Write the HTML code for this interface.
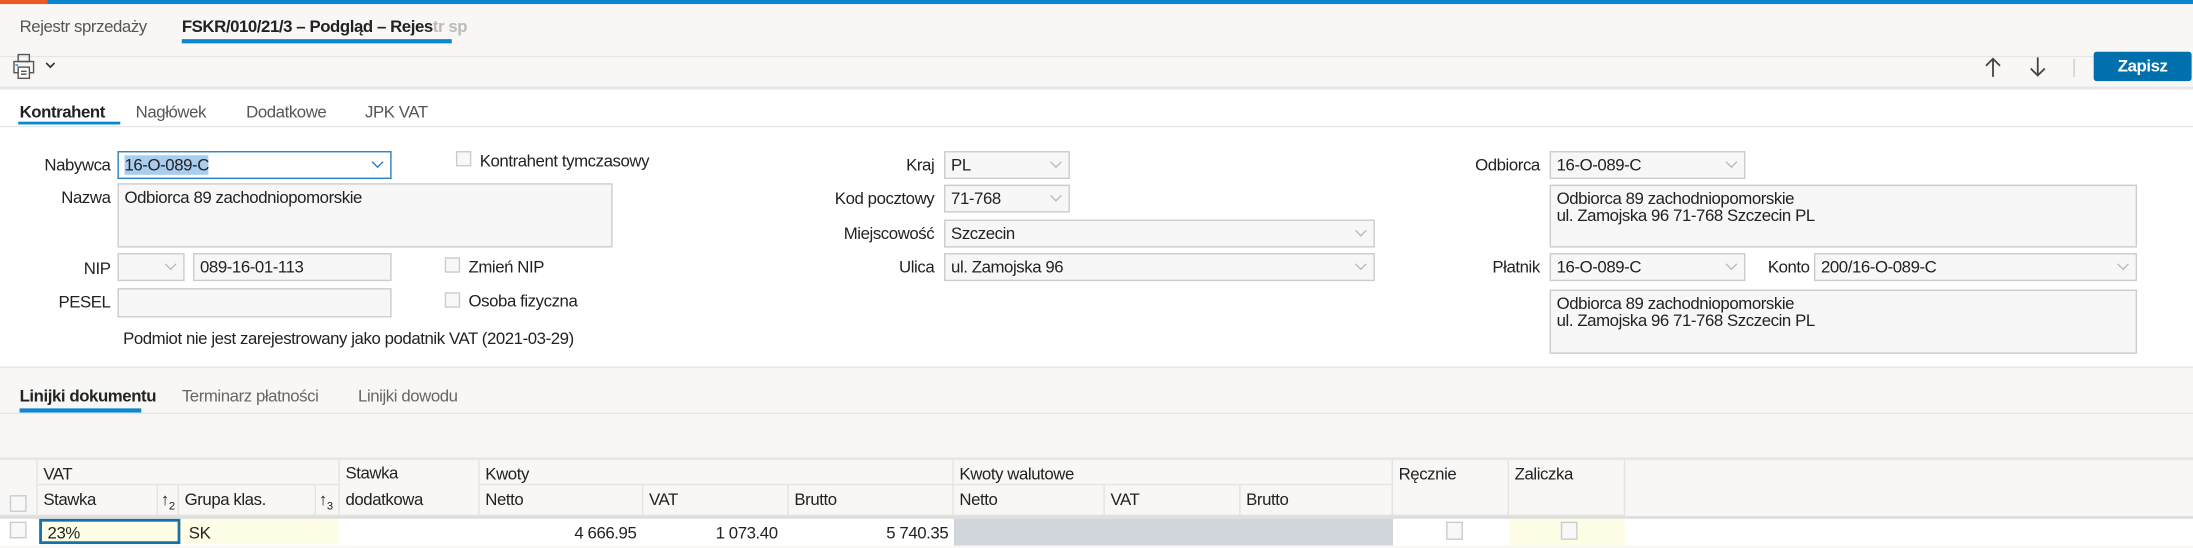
<!DOCTYPE html>
<html><head><meta charset="utf-8"><style>
html,body{margin:0;padding:0;width:2193px;height:546px;overflow:hidden;background:#fff}
#w{position:absolute;left:0;top:0;width:1568px;height:391px;transform:scale(1.39859);transform-origin:0 0;font-family:"Liberation Sans",sans-serif;font-size:12px;color:#222;letter-spacing:-0.3px}
.a{position:absolute;white-space:nowrap}
.box{position:absolute;box-sizing:border-box;border:1px solid #ccc;background:#f7f7f7;padding:3px 4px;line-height:12px}
.chev{position:absolute;right:6px;top:4px;width:5px;height:5px;border-right:1px solid #bbb;border-bottom:1px solid #bbb;transform:rotate(45deg)}
.cb{position:absolute;width:11px;height:11px;border:1px solid #ccc;background:#f8f8f8;box-sizing:border-box}
.r{text-align:right}
.g{position:absolute;box-sizing:border-box;border-right:1px solid #e2e2e2;border-bottom:1px solid #e2e2e2;background:#f8f7f6;padding:4px 4px;line-height:12px}
</style></head><body><div id="w">
<div class="a" style="left:0;top:0;width:1568px;height:3px;background:#0a87cf"></div>
<div class="a" style="left:0;top:0;width:34px;height:3px;background:#e85a1f"></div>
<div class="a" style="left:0;top:3px;width:1568px;height:37px;background:#f8f7f6;border-bottom:1px solid #e6e6e6"></div>
<div class="a" style="left:14px;top:12px;color:#555">Rejestr sprzedaży</div>
<div class="a" style="left:130px;top:12px;font-weight:bold;color:#222">FSKR/010/21/3 – Podgląd – Rejes<span style="color:#bbb">tr sp</span></div>
<div class="a" style="left:130px;top:28px;width:193px;height:3px;background:#0a87cf"></div>
<div class="a" style="left:0;top:41px;width:1568px;height:21px;background:#f8f7f6;border-bottom:2px solid #e6e6e6"></div>
<svg class="a" style="left:9px;top:38px" width="34" height="22" viewBox="0 0 34 22"><rect x="4" y="1" width="8" height="5" fill="none" stroke="#555"/><rect x="1" y="6" width="14" height="8" fill="none" stroke="#555"/><rect x="4" y="10" width="8" height="8" fill="#fff" stroke="#555"/><line x1="6" y1="13" x2="10" y2="13" stroke="#555"/><line x1="6" y1="15" x2="10" y2="15" stroke="#555"/><rect x="2" y="8" width="2" height="1" fill="#0a87cf"/><path d="M24 7l3 3 3-3" fill="none" stroke="#333" stroke-width="1.2"/></svg>
<svg class="a" style="left:1418px;top:38px" width="70" height="20"><path d="M7 4v13M2 9l5-5 5 5" fill="none" stroke="#444" stroke-width="1.3"/><path d="M39 3v13M34 11l5 5 5-5" fill="none" stroke="#444" stroke-width="1.3"/><line x1="65" y1="4" x2="65" y2="17" stroke="#ccc"/></svg>
<div class="a" style="left:1497px;top:37px;width:70px;height:21px;background:#0071ad;border-radius:2px;color:#fff;font-weight:bold;text-align:center;line-height:21px">Zapisz</div>
<div class="a" style="left:14px;top:73px;font-weight:bold">Kontrahent</div>
<div class="a" style="left:97px;top:73px;color:#555">Nagłówek</div>
<div class="a" style="left:176px;top:73px;color:#555">Dodatkowe</div>
<div class="a" style="left:261px;top:73px;color:#555">JPK VAT</div>
<div class="a" style="left:13px;top:87px;width:73px;height:2px;background:#0a87cf"></div>
<div class="a" style="left:0;top:90px;width:1568px;height:1px;background:#e6e6e6"></div>
<div class="a r" style="left:0;top:111px;width:79px">Nabywca</div>
<div class="box" style="left:84px;top:108px;width:196px;height:20px;border-color:#2a7fc0;background:#fff"><span style="background:#a9cdef">16-O-089-C</span><div class="chev" style="border-color:#2a7fc0"></div></div>
<div class="cb" style="left:326px;top:108px"></div><div class="a" style="left:343px;top:108px">Kontrahent tymczasowy</div>
<div class="a r" style="left:0;top:134px;width:79px">Nazwa</div>
<div class="box" style="left:84px;top:131px;width:354px;height:46px">Odbiorca 89 zachodniopomorskie</div>
<div class="a r" style="left:0;top:185px;width:79px">NIP</div>
<div class="box" style="left:84px;top:181px;width:48px;height:20px"><div class="chev"></div></div>
<div class="box" style="left:138px;top:181px;width:142px;height:20px">089-16-01-113</div>
<div class="cb" style="left:318px;top:184px"></div><div class="a" style="left:335px;top:184px">Zmień NIP</div>
<div class="a r" style="left:0;top:209px;width:79px">PESEL</div>
<div class="box" style="left:84px;top:206px;width:196px;height:21px"></div>
<div class="cb" style="left:318px;top:209px"></div><div class="a" style="left:335px;top:208px">Osoba fizyczna</div>
<div class="a" style="left:88px;top:235px">Podmiot nie jest zarejestrowany jako podatnik VAT (2021-03-29)</div>
<div class="a r" style="left:560px;top:111px;width:108px">Kraj</div>
<div class="box" style="left:675px;top:108px;width:90px;height:20px">PL<div class="chev"></div></div>
<div class="a r" style="left:560px;top:135px;width:108px">Kod pocztowy</div>
<div class="box" style="left:675px;top:132px;width:90px;height:20px">71-768<div class="chev"></div></div>
<div class="a r" style="left:560px;top:160px;width:108px">Miejscowość</div>
<div class="box" style="left:675px;top:157px;width:308px;height:20px">Szczecin<div class="chev"></div></div>
<div class="a r" style="left:560px;top:184px;width:108px">Ulica</div>
<div class="box" style="left:675px;top:181px;width:308px;height:20px">ul. Zamojska 96<div class="chev"></div></div>
<div class="a r" style="left:1000px;top:111px;width:101px">Odbiorca</div>
<div class="box" style="left:1108px;top:108px;width:140px;height:20px">16-O-089-C<div class="chev"></div></div>
<div class="box" style="left:1108px;top:132px;width:420px;height:45px">Odbiorca 89 zachodniopomorskie<br>ul. Zamojska 96 71-768 Szczecin PL</div>
<div class="a r" style="left:1000px;top:184px;width:101px">Płatnik</div>
<div class="box" style="left:1108px;top:181px;width:140px;height:20px">16-O-089-C<div class="chev"></div></div>
<div class="a" style="left:1264px;top:184px">Konto</div>
<div class="box" style="left:1297px;top:181px;width:231px;height:20px">200/16-O-089-C<div class="chev"></div></div>
<div class="box" style="left:1108px;top:207px;width:420px;height:46px">Odbiorca 89 zachodniopomorskie<br>ul. Zamojska 96 71-768 Szczecin PL</div>
<div class="a" style="left:0;top:262px;width:1568px;height:129px;background:#f8f7f6;border-top:1px solid #e6e6e6"></div>
<div class="a" style="left:14px;top:276px;font-weight:bold">Linijki dokumentu</div>
<div class="a" style="left:130px;top:276px;color:#666">Terminarz płatności</div>
<div class="a" style="left:256px;top:276px;color:#666">Linijki dowodu</div>
<div class="a" style="left:14px;top:292px;width:87px;height:3px;background:#0a87cf"></div>
<div class="a" style="left:0;top:295px;width:1568px;height:1px;background:#e6e6e6"></div>
<div class="a" style="left:0;top:327px;width:1568px;height:2px;background:#e6e6e6"></div>
<div class="g" style="left:0;top:329px;width:27px;height:40px"></div>
<div class="cb" style="left:7px;top:354px;width:12px;height:12px"></div>
<div class="g" style="left:27px;top:329px;width:216px;height:18px">VAT</div>
<div class="g" style="left:27px;top:347px;width:86px;height:22px">Stawka</div>
<div class="g" style="left:113px;top:347px;width:15px;height:22px;padding:4px 2px">↑<sub style="font-size:8px">2</sub></div>
<div class="g" style="left:128px;top:347px;width:98px;height:22px">Grupa klas.</div>
<div class="g" style="left:226px;top:347px;width:17px;height:22px;padding:4px 2px">↑<sub style="font-size:8px">3</sub></div>
<div class="g" style="left:243px;top:329px;width:100px;height:40px;line-height:19px;padding-top:0">Stawka<br>dodatkowa</div>
<div class="g" style="left:343px;top:329px;width:339px;height:18px">Kwoty</div>
<div class="g" style="left:343px;top:347px;width:117px;height:22px">Netto</div>
<div class="g" style="left:460px;top:347px;width:104px;height:22px">VAT</div>
<div class="g" style="left:564px;top:347px;width:118px;height:22px">Brutto</div>
<div class="g" style="left:682px;top:329px;width:314px;height:18px">Kwoty walutowe</div>
<div class="g" style="left:682px;top:347px;width:108px;height:22px">Netto</div>
<div class="g" style="left:790px;top:347px;width:97px;height:22px">VAT</div>
<div class="g" style="left:887px;top:347px;width:109px;height:22px">Brutto</div>
<div class="g" style="left:996px;top:329px;width:83px;height:40px">Ręcznie</div>
<div class="g" style="left:1079px;top:329px;width:83px;height:40px">Zaliczka</div>
<div class="a" style="left:0;top:369px;width:1568px;height:2px;background:#ddd"></div>
<div class="a" style="left:0;top:371px;width:1568px;height:19px;background:#fff"></div>
<div class="cb" style="left:7px;top:373px;width:12px;height:12px"></div>
<div class="a" style="left:28px;top:371px;width:101px;height:18px;box-sizing:border-box;border:2px solid #1770a8;background:#fefee6;padding:1px 4px">23%</div>
<div class="a" style="left:129px;top:371px;width:113px;height:18px;background:#fefee6;padding:3px 6px;box-sizing:border-box">SK</div>
<div class="a r" style="left:343px;top:374px;width:112px">4 666.95</div>
<div class="a r" style="left:460px;top:374px;width:96px">1 073.40</div>
<div class="a r" style="left:564px;top:374px;width:114px">5 740.35</div>
<div class="a" style="left:682px;top:371px;width:314px;height:19px;background:#d0d6dc"></div>
<div class="cb" style="left:1034px;top:373px;width:12px;height:13px"></div>
<div class="a" style="left:1079px;top:371px;width:83px;height:19px;background:#fefee6"></div>
<div class="cb" style="left:1116px;top:373px;width:12px;height:13px"></div>
</div></body></html>
